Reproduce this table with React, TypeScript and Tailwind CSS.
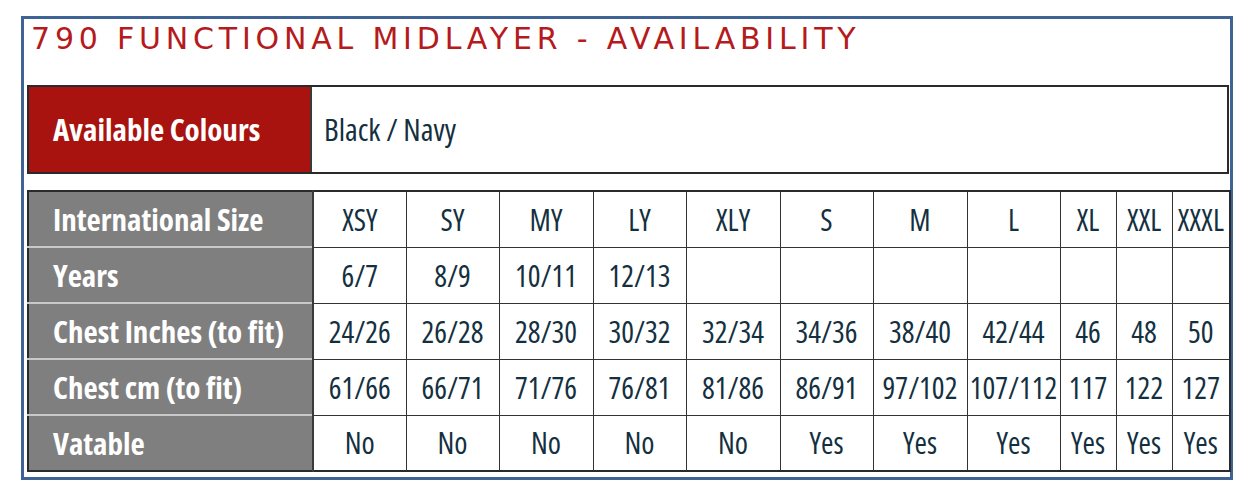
import React from 'react';

const sizes = ['XSY', 'SY', 'MY', 'LY', 'XLY', 'S', 'M', 'L', 'XL', 'XXL', 'XXXL'];

const rows: { label: string; values: string[] }[] = [
  { label: 'Years', values: ['6/7', '8/9', '10/11', '12/13', '', '', '', '', '', '', ''] },
  {
    label: 'Chest Inches (to fit)',
    values: ['24/26', '26/28', '28/30', '30/32', '32/34', '34/36', '38/40', '42/44', '46', '48', '50'],
  },
  {
    label: 'Chest cm (to fit)',
    values: ['61/66', '66/71', '71/76', '76/81', '81/86', '86/91', '97/102', '107/112', '117', '122', '127'],
  },
  { label: 'Vatable', values: ['No', 'No', 'No', 'No', 'No', 'Yes', 'Yes', 'Yes', 'Yes', 'Yes', 'Yes'] },
];

const colWidths = [93, 93, 94, 93, 94, 93, 94, 93, 56, 56, 58];

const narrow = "font-['Open_Sans','DejaVu_Sans_Condensed',sans-serif] font-stretch-condensed";

const App: React.FC = () => {
  const allRows = [{ label: 'International Size', values: sizes }, ...rows];

  return (
    <div className="w-[1256px] h-[500px] bg-white pt-4 pl-[21px]">
      <div className="w-[1212px] h-[464px] border-[3px] border-[#3e6394] pl-[3px] pt-[3px]">
        {/* Title */}
        <h1 className="font-['DejaVu_Sans',sans-serif] text-[30px] leading-[34px] tracking-[4.8px] text-[#b51a1c] pl-[4px] h-[63px] whitespace-nowrap">
          790 FUNCTIONAL MIDLAYER - AVAILABILITY
        </h1>

        {/* Colours */}
        <div className="flex w-[1202px] h-[89px] border-2 border-[#2a2a2a]">
          <div className={`w-[283px] bg-[#a8130f] border-r-2 border-[#3a3a3a] flex items-center pl-[24px] text-white font-bold text-[31px] whitespace-nowrap ${narrow}`}>
            Available Colours
          </div>
          <div className={`flex-1 flex items-center pl-[12px] text-[#14303f] font-medium text-[31px] ${narrow}`}>
            Black / Navy
          </div>
        </div>

        {/* Size table */}
        <table className={`mt-[16px] w-[1202px] table-fixed border-collapse border-2 border-[#2a2a2a] ${narrow}`}>
          <colgroup>
            <col className="w-[285px]" />
            {colWidths.map((w, i) => (
              <col key={i} style={{ width: w }} />
            ))}
          </colgroup>
          <tbody>
            {allRows.map((row, ri) => (
              <tr key={row.label} className="h-[56px]">
                <th
                  className={`bg-[#7f7f7f] text-left p-0 pl-[24px] text-white font-bold text-[31px] whitespace-nowrap border-r-2 border-[#3a3a3a] ${
                    ri > 0 ? 'border-t-2 border-t-[#c9c9c9]' : ''
                  }`}
                >
                  {row.label}
                </th>
                {row.values.map((v, vi) => (
                  <td
                    key={vi}
                    className="p-0 border border-[#333] text-center text-[#14303f] font-medium text-[30px] whitespace-nowrap overflow-hidden"
                  >
                    {v}
                  </td>
                ))}
              </tr>
            ))}
          </tbody>
        </table>
      </div>
    </div>
  );
};

export default App;
